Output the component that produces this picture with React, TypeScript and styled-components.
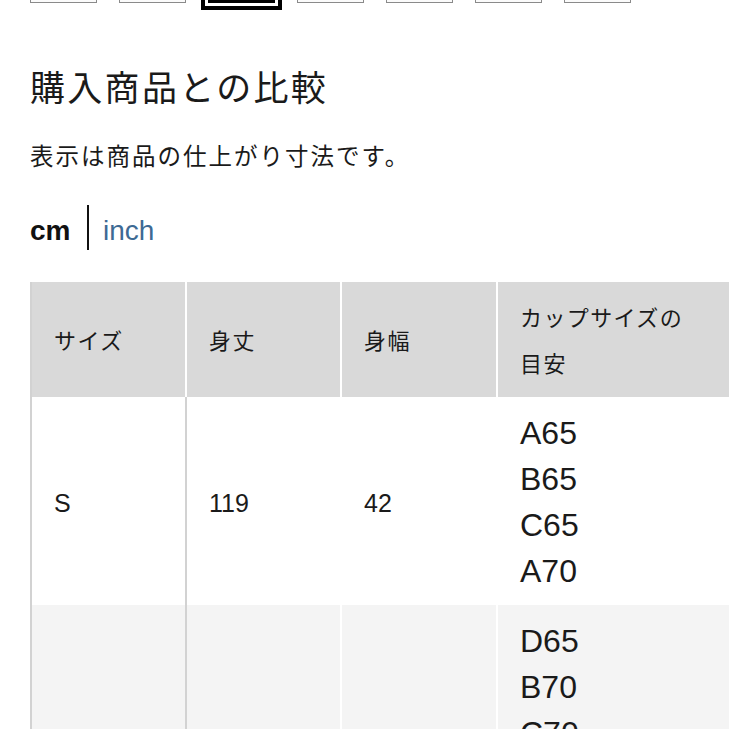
import React from "react";
import styled, { createGlobalStyle } from "styled-components";

const GlobalStyle = createGlobalStyle`
  html, body {
    margin: 0;
    padding: 0;
    background: #ffffff;
    overflow: hidden;
  }
  body {
    font-family: "Noto Sans CJK JP", "Noto Sans", sans-serif;
    color: #1a1a1a;
  }
`;

const Page = styled.div`
  width: 729px;
  height: 729px;
  overflow: hidden;
  display: flex;
  flex-direction: column;
`;

const SwatchRow = styled.div`
  display: flex;
  align-items: center;
  gap: 22px;
  padding-left: 30px;
  margin-top: -64px;
`;

const Swatch = styled.div<{ $color: string }>`
  width: 67px;
  height: 60px;
  box-sizing: border-box;
  border: 1.5px solid #8a8a8a;
  background: ${(p) => p.$color};
`;

const SelectedRing = styled.div`
  margin: 0 -7px;
  padding: 3px;
  border: 4px solid #000;
  background: #fff;
  display: flex;
`;

const SelectedSwatch = styled.div`
  width: 67px;
  height: 60px;
  background: #000;
`;

const Content = styled.div`
  padding-left: 30px;
  display: flex;
  flex-direction: column;
`;

const Heading = styled.h2`
  margin: 54px 0 0;
  font-size: 35px;
  line-height: 43px;
  font-weight: 400;
  letter-spacing: 2.3px;
  color: #1a1a1a;
`;

const Note = styled.p`
  margin: 31px 0 0;
  font-size: 23.5px;
  line-height: 34px;
  letter-spacing: 2px;
  color: #1a1a1a;
`;

const UnitToggle = styled.div`
  margin-top: 33px;
  height: 45px;
  display: flex;
  align-items: center;
  font-family: "Liberation Sans", Arial, sans-serif;
  font-size: 28px;
  line-height: 28px;
`;

const Unit = styled.span<{ $active?: boolean }>`
  font-weight: ${(p) => (p.$active ? 700 : 400)};
  color: ${(p) => (p.$active ? "#111" : "#3d6a94")};
  padding-top: 6px;
`;

const Divider = styled.span`
  width: 1.5px;
  height: 45px;
  background: #111;
  margin: 0 14px 0 17px;
`;

const TableWrap = styled.div`
  margin-top: 32px;
  padding-left: 30px;
  width: 100%;
  overflow: hidden;
`;

const Table = styled.table`
  border-collapse: separate;
  border-spacing: 0;
  table-layout: fixed;
  width: 767px;
  border-left: 2px solid #d2d2d2;
`;

const HeadCell = styled.th`
  background: #d9d9d9;
  border-right: 2px solid #ffffff;
  padding: 11px 22px 12px;
  text-align: left;
  vertical-align: middle;
  font-weight: 400;
  font-size: 22px;
  line-height: 46px;
  letter-spacing: 1.4px;
  color: #1a1a1a;
`;

const Row = styled.tr<{ $shade?: boolean }>`
  background: ${(p) => (p.$shade ? "#f4f4f4" : "#ffffff")};
`;

const Cell = styled.td<{ $first?: boolean }>`
  border-right: 2px solid ${(p) => (p.$first ? "#d2d2d2" : "#ffffff")};
  padding: 14px 22px 10px;
  vertical-align: middle;
  font-family: "Liberation Sans", Arial, sans-serif;
  font-size: 25px;
  line-height: 46px;
  color: #1a1a1a;
`;

const CupCell = styled(Cell)`
  padding: 13px 22px 11px;
  font-size: 32px;
  line-height: 46px;
`;

const CupLine = styled.div``;

const rows = [
  { size: "S", length: "119", width: "42", cups: ["A65", "B65", "C65", "A70"] },
  {
    size: "M",
    length: "121",
    width: "45",
    cups: ["D65", "B70", "C70", "D70", "A75", "B75", "C75"],
  },
];

export default function App() {
  return (
    <>
      <GlobalStyle />
      <Page>
        <SwatchRow>
          <Swatch $color="#fbfbfb" />
          <Swatch $color="#fbfbfb" />
          <SelectedRing>
            <SelectedSwatch />
          </SelectedRing>
          <Swatch $color="#fbfbfb" />
          <Swatch $color="#fbfbfb" />
          <Swatch $color="#fbfbfb" />
          <Swatch $color="#fbfbfb" />
        </SwatchRow>
        <Content>
          <Heading>購入商品との比較</Heading>
          <Note>表示は商品の仕上がり寸法です。</Note>
          <UnitToggle>
            <Unit $active>cm</Unit>
            <Divider />
            <Unit>inch</Unit>
          </UnitToggle>
        </Content>
        <TableWrap>
          <Table>
            <colgroup>
              <col style={{ width: 155 }} />
              <col style={{ width: 155 }} />
              <col style={{ width: 156 }} />
              <col style={{ width: 299 }} />
            </colgroup>
            <thead>
              <tr>
                <HeadCell>サイズ</HeadCell>
                <HeadCell>身丈</HeadCell>
                <HeadCell>身幅</HeadCell>
                <HeadCell>
                  カップサイズの
                  <br />
                  目安
                </HeadCell>
              </tr>
            </thead>
            <tbody>
              {rows.map((r, i) => (
                <Row key={r.size} $shade={i % 2 === 1}>
                  <Cell $first>{r.size}</Cell>
                  <Cell>{r.length}</Cell>
                  <Cell>{r.width}</Cell>
                  <CupCell>
                    {r.cups.map((c) => (
                      <CupLine key={c}>{c}</CupLine>
                    ))}
                  </CupCell>
                </Row>
              ))}
            </tbody>
          </Table>
        </TableWrap>
      </Page>
    </>
  );
}
